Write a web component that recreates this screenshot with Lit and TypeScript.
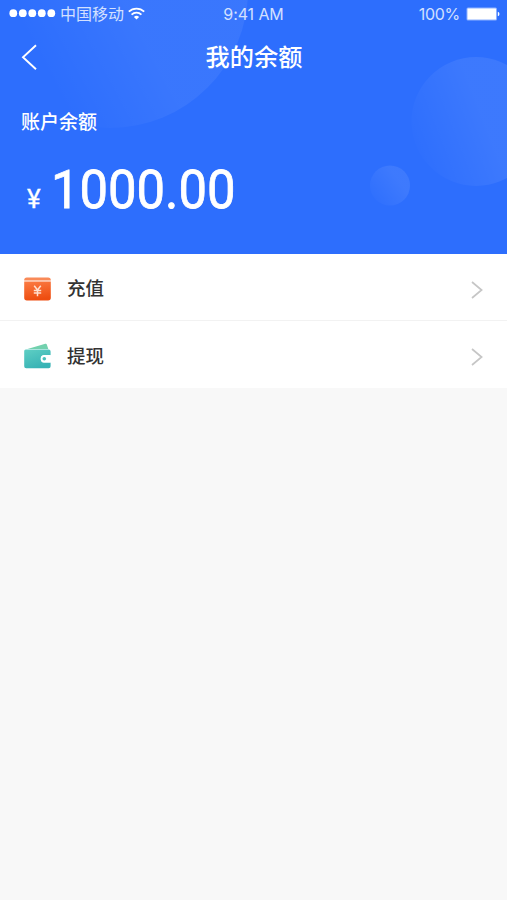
import { LitElement, html, css, svg } from "lit";
import { customElement, property } from "lit/decorators.js";

const rechargeIcon = html`<svg width="27" height="24" viewBox="0 0 27 24">
  <defs>
    <linearGradient id="card" x1="0" y1="0" x2="0.2" y2="1">
      <stop offset="0" stop-color="#fb7b43" />
      <stop offset="1" stop-color="#ee4d10" />
    </linearGradient>
  </defs>
  <path d="M0.2 3.4V3a2.6 2.6 0 0 1 2.6-2.6h21.4A2.6 2.6 0 0 1 26.8 3v.4z" fill="#f98a58" />
  <path d="M0.2 4.6h26.6v16.2a2.7 2.7 0 0 1-2.7 2.7H2.9a2.7 2.7 0 0 1-2.7-2.7z" fill="url(#card)" />
  <path d="M10.2 8.8l3.3 4.2 3.3-4.2M9.8 13.4h7.4M9.8 16.1h7.4M13.5 13v6.2" fill="none" stroke="#ffe0d0" stroke-width="1.5" />
</svg>`;

const withdrawIcon = html`<svg width="27" height="26" viewBox="0 0 27 26">
  <defs>
    <linearGradient id="wallet" x1="0" y1="0" x2="0.5" y2="1">
      <stop offset="0" stop-color="#5fcfc4" />
      <stop offset="1" stop-color="#38b3b5" />
    </linearGradient>
  </defs>
  <path d="M3.5 5.9L21.3 0.8a1.2 1.2 0 0 1 1.5.8l1.5 4.3z" fill="#72d1ae" />
  <path d="M1.8 6.4h22.8a2 2 0 0 1 2 2v3.9h-6.2a3.6 3.6 0 0 0 0 7.2h6.2v3.7a2 2 0 0 1-2 2H2.2a2 2 0 0 1-2-2V8A1.6 1.6 0 0 1 1.8 6.4z" fill="url(#wallet)" />
  <path d="M20.4 12h6.4v7.4h-6.4a3.7 3.7 0 0 1 0-7.4z" fill="#fff" />
  <circle cx="20.3" cy="15.7" r="1.8" fill="#49bfbc" />
</svg>`;

@customElement("status-bar")
export class StatusBar extends LitElement {
  static styles = css`
    :host {
      display: grid;
      grid-template-columns: 1fr auto 1fr;
      align-items: center;
      height: 28px;
      padding: 0 7px 0 9px;
      color: #d3e0ff;
      font: 16px/28px Inter, "Noto Sans CJK SC", sans-serif;
    }
    .left, .right { display: flex; align-items: center; }
    .right { justify-content: flex-end; }
    .dots { margin: -2px 4px 0 0; }
    .carrier { font: 16px/26px "Noto Sans CJK SC", sans-serif; margin-top: -3px; }
    .wifi { margin: -2px 0 0 4px; }
    .time { font-size: 16px; letter-spacing: -0.1px; margin-left: -2px; }
    .level { font-size: 16px; letter-spacing: -0.3px; }
    .battery { margin: -1px 0 0 6px; }
    svg { display: block; }
  `;
  render() {
    return html`
      <div class="left">
        <svg class="dots" width="47" height="9" viewBox="0 0 47 9" fill="#fff">
          ${[0, 1, 2, 3, 4].map((i) => svg`<circle cx=${4.3 + i * 9.5} cy="4.2" r="3.9" />`)}
        </svg>
        <span class="carrier">中国移动</span>
        <svg class="wifi" width="17" height="13" viewBox="0 0 17 13" fill="none" stroke="#fff" stroke-width="1.8">
          <path d="M0.8 4.7a11 11 0 0 1 15.4 0" />
          <path d="M3.6 7.7a7 7 0 0 1 9.8 0" />
          <path d="M8.5 12.6L5.9 10a3.7 3.7 0 0 1 5.2 0z" fill="#fff" stroke="none" />
        </svg>
      </div>
      <span class="time">9:41 AM</span>
      <div class="right">
        <span class="level">100%</span>
        <svg class="battery" width="34" height="14" viewBox="0 0 34 14">
          <rect x="0.5" y="0.5" width="30.5" height="13" rx="1.5" fill="#8fb2ff" />
          <rect x="1.5" y="1.5" width="28.5" height="11" rx="0.5" fill="#fff" />
          <path d="M31.8 4.7q1.7.6 1.7 2.3t-1.7 2.3z" fill="#fff" />
        </svg>
      </div>
    `;
  }
}

@customElement("menu-row")
export class MenuRow extends LitElement {
  @property() label = "";
  @property({ attribute: false }) icon: unknown = null;

  static styles = css`
    :host {
      display: flex;
      align-items: center;
      height: 66px;
      box-sizing: border-box;
      padding: 3px 24px 0 24px;
      background: #fff;
    }
    .icon { width: 27px; display: flex; }
    .label {
      flex: 1;
      margin: -3px 0 0 16px;
      color: #333;
      font: 500 18.5px/28px "Noto Sans CJK SC", sans-serif;
    }
    .chevron { margin-top: 2px; }
    svg { display: block; }
  `;
  render() {
    return html`
      <span class="icon">${this.icon}</span>
      <span class="label">${this.label}</span>
      <svg class="chevron" width="12" height="18" viewBox="0 0 12 18" fill="none" stroke="#c6c6c6" stroke-width="1.7">
        <path d="M1 1l9.6 8L1 17" />
      </svg>
    `;
  }
}

@customElement("app-root")
export class AppRoot extends LitElement {
  static styles = css`
    :host {
      display: block;
      min-height: 900px;
      background: #f8f8f8;
      font-family: "Noto Sans CJK SC", sans-serif;
    }
    .hero {
      position: relative;
      height: 254px;
      overflow: hidden;
      background: #2d6efd;
      color: #fff;
    }
    .bubbles { position: absolute; inset: 0; display: block; }
    .content { position: relative; }
    .nav {
      display: grid;
      grid-template-columns: 60px 1fr 60px;
      align-items: center;
      height: 58px;
    }
    .back { display: block; margin-left: 21px; }
    .title { margin: -2px 0 0 1px; text-align: center; font: 500 24.2px/36px "Noto Sans CJK SC", sans-serif; }
    .caption { padding: 21px 0 0 21px; font: 500 19px/28px "Noto Sans CJK SC", sans-serif; }
    .amount { display: flex; align-items: baseline; padding: 23px 0 0 27px; }
    .yen {
      width: 23.5px;
      font: 400 26px/64px Roboto, sans-serif;
      -webkit-text-stroke: 0.3px #fff;
    }
    .value {
      font: 400 54px/64px Roboto, sans-serif;
      -webkit-text-stroke: 0.8px #fff;
      transform: scaleX(0.94);
      transform-origin: left;
    }
    .menu { background: #fff; }
    .menu menu-row:last-child { height: 67px; padding-top: 3px; }
    .divider { height: 1px; background: #f2f2f2; }
  `;
  render() {
    return html`
      <section class="hero">
        <svg class="bubbles" width="507" height="254" viewBox="0 0 507 254">
          <defs>
            <linearGradient id="b1" gradientUnits="userSpaceOnUse" x1="60" y1="100" x2="210" y2="20">
              <stop offset="0" stop-color="#fff" stop-opacity="0" />
              <stop offset="0.6" stop-color="#fff" stop-opacity="0.06" />
              <stop offset="1" stop-color="#fff" stop-opacity="0.06" />
            </linearGradient>
            <linearGradient id="b2" x1="0" y1="0.65" x2="0.9" y2="0.3">
              <stop offset="0" stop-color="#fff" stop-opacity="0.005" />
              <stop offset="0.6" stop-color="#fff" stop-opacity="0.075" />
            </linearGradient>
            <linearGradient id="b3" x1="0.1" y1="0.9" x2="0.9" y2="0.3">
              <stop offset="0" stop-color="#fff" stop-opacity="0.01" />
              <stop offset="0.8" stop-color="#fff" stop-opacity="0.08" />
            </linearGradient>
          </defs>
          <circle cx="110" cy="-10" r="138" fill="url(#b1)" />
          <circle cx="476" cy="121.5" r="64.5" fill="url(#b2)" />
          <circle cx="390" cy="185.5" r="20" fill="url(#b3)" />
        </svg>
        <div class="content">
          <status-bar></status-bar>
          <header class="nav">
            <svg class="back" width="17" height="26" viewBox="0 0 17 26" fill="none" stroke="#fff" stroke-width="1.9">
              <path d="M15 1.2L2 13.2l13 12" />
            </svg>
            <h1 class="title">我的余额</h1>
          </header>
          <div class="caption">账户余额</div>
          <div class="amount"><span class="yen">¥</span><span class="value">1000.00</span></div>
        </div>
      </section>
      <nav class="menu">
        <menu-row label="充值" .icon=${rechargeIcon}></menu-row>
        <div class="divider"></div>
        <menu-row label="提现" .icon=${withdrawIcon}></menu-row>
      </nav>
    `;
  }
}
